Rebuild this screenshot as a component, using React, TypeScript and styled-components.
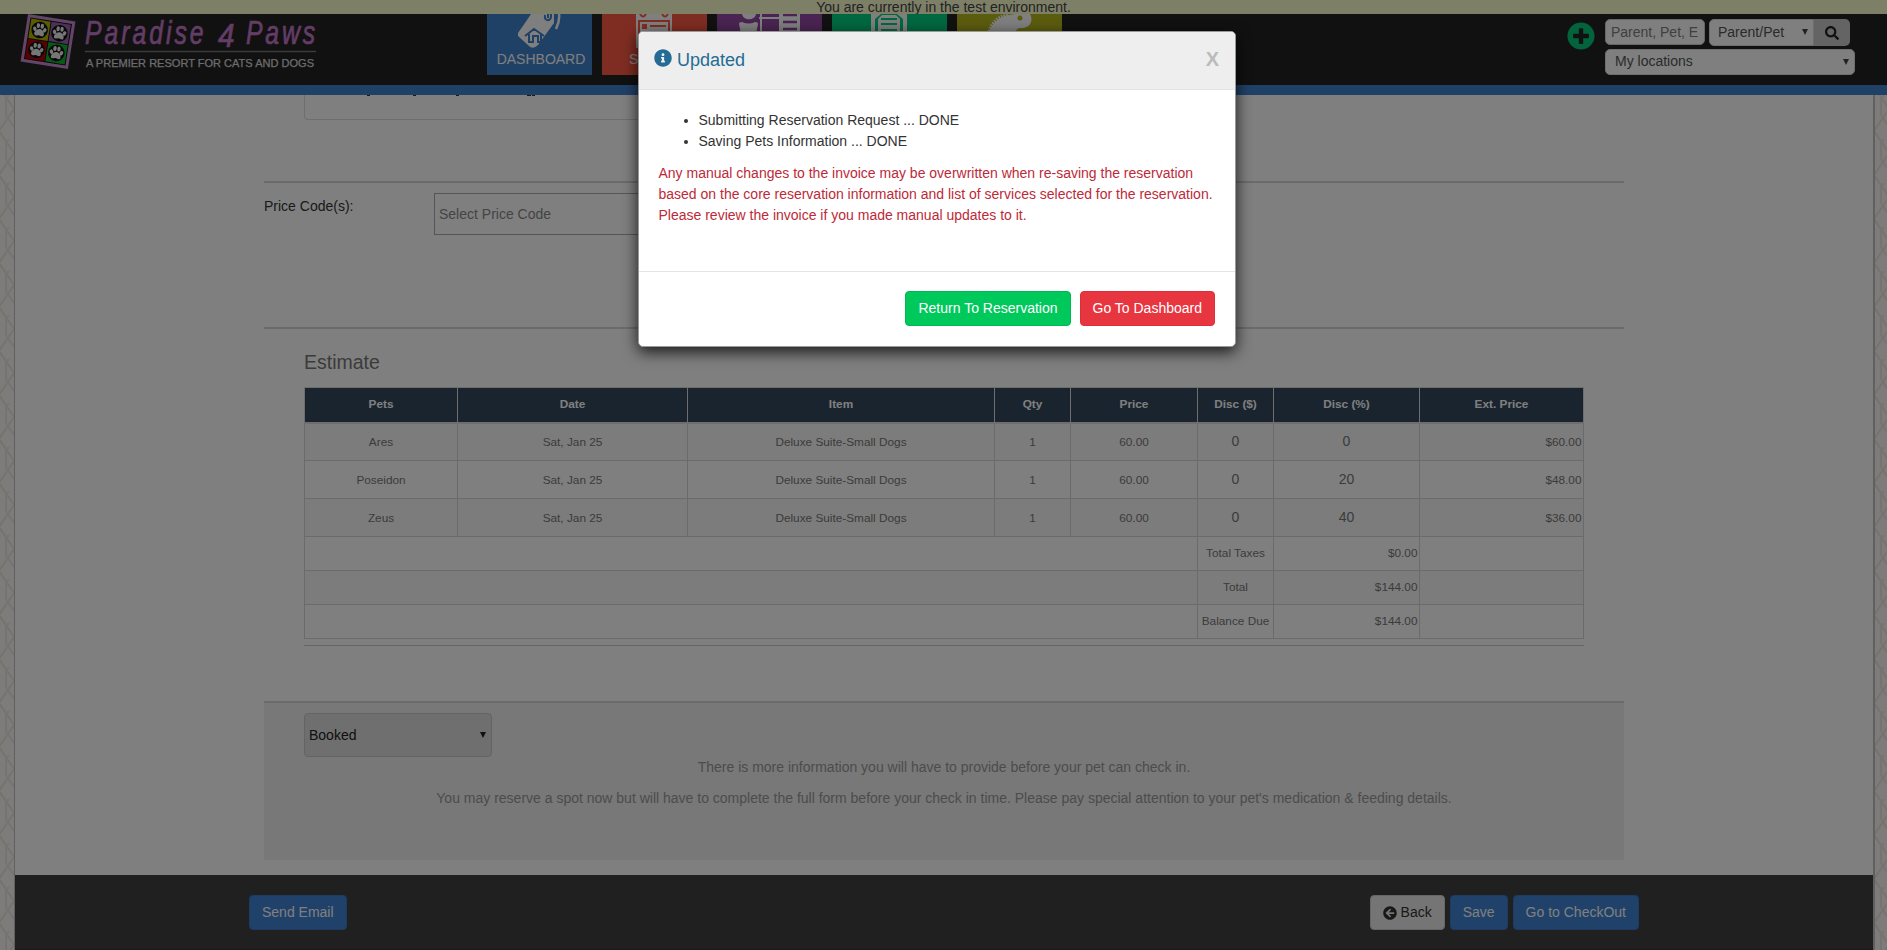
import React from "react";
import styled, { createGlobalStyle } from "styled-components";
import { FaInfoCircle, FaSearch, FaArrowCircleLeft, FaPlusCircle } from "react-icons/fa";

const GlobalStyle = createGlobalStyle`
  * { box-sizing: border-box; }
  body {
    margin: 0;
    overflow: hidden;
    font: 14px/21px "Liberation Sans", Arial, sans-serif;
    color: #333;
  }
`;

const Page = styled.div`
  position: relative;
  width: 1887px;
  height: 950px;
  overflow: hidden;
  display: flex;
  flex-direction: column;
  background: #fff;
`;

const Banner = styled.div`
  flex: 0 0 14px;
  line-height: 14px;
  text-align: center;
  background: #fcffce;
  color: #444;
`;

const Header = styled.header`
  flex: 0 0 81px;
  display: flex;
  background: #222;
  border-bottom: 10px solid #4083cc;
`;

const LogoBox = styled.div`
  width: 487px;
  height: 71px;
`;

const Nav = styled.nav`
  display: flex;
  gap: 10px;
  flex: 1;
`;

const Tile = styled.div<{ $bg: string; $wide?: boolean }>`
  width: ${(p) => (p.$wide ? 115 : 105)}px;
  height: 61px;
  display: flex;
  flex-direction: column;
  background: ${(p) => p.$bg};
  color: #fff;
  svg { flex: none; }
`;

const TileLabel = styled.span<{ $start?: boolean }>`
  margin-top: -8px;
  padding-left: ${(p) => (p.$start ? 27 : 3)}px;
  text-align: ${(p) => (p.$start ? "left" : "center")};
`;

const HeaderTools = styled.div`
  display: flex;
  width: 320px;
`;

const AddButton = styled.div`
  width: 38px;
  padding-top: 8px;
  color: #06c67b;
  font-size: 28px;
  line-height: 0;
`;

const ToolRows = styled.div`
  display: flex;
  flex-direction: column;
  gap: 3px;
  padding-top: 5px;
`;

const SearchRow = styled.div`
  display: flex;
  height: 27px;
`;

const SearchInput = styled.div`
  width: 100px;
  height: 26px;
  margin-right: 4px;
  padding: 0 5px;
  line-height: 25px;
  background: #fff;
  border: 1px solid #ccc;
  border-radius: 5px;
  color: #808080;
  white-space: nowrap;
  overflow: hidden;
`;

const Arrow = styled.i<{ $dark?: boolean }>`
  width: 0;
  height: 0;
  border: 3px solid transparent;
  border-top: 6px solid ${(p) => (p.$dark ? "#222" : "#444")};
  border-bottom: 0;
`;

const KindSelect = styled.div`
  width: 105px;
  display: flex;
  align-items: center;
  justify-content: space-between;
  padding: 0 5px 1px 8px;
  background: #fff;
  border: 1px solid #ddd;
  border-radius: 5px 0 0 5px;
  color: #555;
`;

const SearchButton = styled.div`
  width: 36px;
  display: flex;
  align-items: center;
  justify-content: center;
  background: #c8c8c8;
  border-radius: 0 5px 5px 0;
  color: #222;
`;

const LocationSelect = styled(KindSelect)`
  width: 250px;
  height: 26px;
  padding-left: 9px;
  border-radius: 5px;
`;

const Middle = styled.div`
  flex: 1;
  min-height: 0;
  display: flex;
`;

const Strip = styled.div<{ $right?: boolean }>`
  width: ${(p) => (p.$right ? 14 : 15)}px;
  overflow: hidden;
  background: #faf8f6;
  border: 0 solid #c4c0bd;
  border-width: ${(p) => (p.$right ? "0 0 0 2px" : "0 1px 0 0")};
  svg { display: block; }
`;

const Sheet = styled.main`
  width: 1858px;
  display: flex;
  flex-direction: column;
`;

const Content = styled.div`
  width: 1360px;
  height: 780px;
  margin-left: 249px;
`;

const CutPanel = styled.div`
  width: 600px;
  height: 25px;
  margin-left: 40px;
  border: 1px solid #dcdcdc;
  border-top: 0;
  border-radius: 0 0 4px 4px;
  svg { display: block; }
`;

const PriceSection = styled.section`
  height: 146px;
  margin-top: 61px;
  padding-top: 10px;
  border-top: 2px solid #d6d6d6;
  display: flex;
`;

const PriceLabel = styled.label`
  width: 170px;
  padding-top: 3px;
  color: #333;
`;

const PriceInput = styled.div`
  width: 620px;
  height: 42px;
  padding-left: 4px;
  border: 1px solid #aaa;
  color: #888;
  line-height: 40px;
`;

const EstimateSection = styled.section`
  height: 374px;
  padding: 19px 40px 0;
  border-top: 2px solid #d6d6d6;
`;

const EstimateTitle = styled.h3`
  height: 39px;
  margin: 0;
  font-size: 19.5px;
  font-weight: normal;
  line-height: 28px;
  color: #777;
`;

const Table = styled.table`
  width: 1279px;
  table-layout: fixed;
  border-collapse: collapse;
  font-size: 11.8px;
  line-height: 17px;
  color: #777;
  tbody tr:nth-child(odd) { background: #f9f9f9; }
`;

const Th = styled.th`
  height: 35px;
  padding: 0;
  border: 1px solid #ddd;
  border-bottom: 2px solid #ddd;
  background: #34495e;
  color: #fff;
`;

const Td = styled.td<{ $right?: boolean; $big?: boolean; $short?: boolean }>`
  height: ${(p) => (p.$short ? 34 : 38)}px;
  padding: ${(p) => (p.$big ? "0 0 1px" : p.$short ? "0 1.5px" : "2px 1.5px 0")};
  border: 1px solid #d6d6d6;
  text-align: ${(p) => (p.$right ? "right" : "center")};
  font-size: ${(p) => (p.$big ? "14px" : "inherit")};
  white-space: nowrap;
`;

const Rule = styled.div`
  height: 1px;
  margin-top: 6px;
  background: #c8c8c8;
`;

const StatusSection = styled.section`
  height: 159px;
  padding-top: 10px;
  border-top: 2px solid #d6d6d6;
  background: #f0f0f0;
  text-align: center;
  color: #999;
`;

const StatusSelect = styled.div`
  width: 188px;
  height: 44px;
  margin-left: 40px;
  padding: 0 5px 0 4px;
  display: flex;
  align-items: center;
  justify-content: space-between;
  background: #dedede;
  border: 1px solid #c8c8c8;
  border-radius: 4px;
  color: #222;
`;

const Note = styled.p`
  margin: 0 0 10px;
`;

const Footer = styled.footer`
  height: 75px;
  padding: 20px 234px 0 234px;
  display: flex;
  align-items: flex-start;
  justify-content: space-between;
  background: #404040;
  border-bottom: 1px solid #303030;
`;

const ButtonGroup = styled.div<{ $gap: number }>`
  display: flex;
  gap: ${(p) => p.$gap}px;
`;

const tones = {
  blue: ["#4083d2", "#3a78bf", "#fff"],
  light: ["#eaeaea", "#ccc", "#333"],
  green: ["#00c95c", "#00b853", "#fff"],
  red: ["#e83641", "#dd2e3a", "#fff"],
};

const Button = styled.button<{ $tone: keyof typeof tones }>`
  height: 35px;
  padding: 0 12px;
  display: flex;
  align-items: center;
  gap: 4px;
  font: inherit;
  background: ${(p) => tones[p.$tone][0]};
  border: 1px solid ${(p) => tones[p.$tone][1]};
  border-radius: 4px;
  color: ${(p) => tones[p.$tone][2]};
`;

const Backdrop = styled.div`
  position: absolute;
  inset: 0;
  background: rgba(0, 0, 0, 0.5);
`;

const Modal = styled.div`
  position: absolute;
  left: 638px;
  top: 31px;
  width: 598px;
  height: 316px;
  display: flex;
  flex-direction: column;
  background: #fff;
  border: 1px solid #999;
  border-radius: 5px;
  box-shadow: 0 5px 15px rgba(0, 0, 0, 0.8);
  overflow: hidden;
`;

const ModalHeader = styled.div`
  height: 58px;
  padding: 0 16px 0 15px;
  display: flex;
  justify-content: space-between;
  background: #eee;
  border-bottom: 1px solid #e5e5e5;
  color: #246c95;
`;

const ModalTitle = styled.div`
  display: flex;
  gap: 5px;
  font-size: 18px;
  line-height: 56px;
  svg { margin-top: 17px; }
`;

const Close = styled.span`
  font-size: 20px;
  font-weight: bold;
  line-height: 55px;
  color: #bbb;
`;

const ModalBody = styled.div`
  height: 181px;
  padding: 20px 19.5px;
`;

const StepList = styled.ul`
  margin: 0 0 11px;
  padding-left: 40px;
`;

const Warning = styled.p`
  margin: 0;
  color: #bd2938;
`;

const ModalFooter = styled.div`
  flex: 1;
  padding: 19px 20px 0;
  display: flex;
  justify-content: flex-end;
  border-top: 1px solid #e5e5e5;
`;

const Paw = ({ x, y }: { x: number; y: number }) => (
  <g transform={`translate(${x} ${y})`}>
    <circle r="8.3" fill="#111" />
    <g fill="#eee">
      <path d="M0-1C3-1 6 3 4.500 5.300C3.200 6.800 1.500 5.200 0 5.200S-3.200 6.800-4.500 5.300C-6 3-3-1 0-1Z" />
      <ellipse cx="-5" cy="-.5" rx="1.700" ry="2.300" transform="rotate(-25 -5 -.5)" />
      <ellipse cx="-2" cy="-4.200" rx="1.700" ry="2.500" />
      <ellipse cx="2" cy="-4.200" rx="1.700" ry="2.500" />
      <ellipse cx="5" cy="-.5" rx="1.700" ry="2.300" transform="rotate(25 5 -.5)" />
    </g>
  </g>
);

const Logo = () => (
  <svg width="330" height="71" viewBox="0 14 330 71">
    <g transform="translate(48 41.500) rotate(9)">
      <rect x="-22.500" y="-22.500" width="45" height="45" fill="#111" stroke="#c68ad0" strokeWidth="3" />
      <rect x="-20" y="-20" width="19.500" height="19.500" fill="#b4b800" />
      <rect x=".5" y="-20" width="19.500" height="19.500" fill="#9a62ae" />
      <rect x="-20" y=".5" width="19.500" height="19.500" fill="#b80008" />
      <rect x=".5" y=".5" width="19.500" height="19.500" fill="#10b030" />
      <Paw x={-10} y={-10} />
      <Paw x={10} y={-10} />
      <Paw x={-10} y={10} />
      <Paw x={10} y={10} />
    </g>
    <g fill="#c67acb" fontFamily="Liberation Sans, sans-serif" fontStyle="italic" fontSize="33" stroke="#c67acb" strokeWidth=".7">
      <text transform="translate(85 43.500) scale(.75 1)" textLength="158" lengthAdjust="spacing">Paradise</text>
      <text transform="translate(218 46.500) scale(.9 1)">4</text>
      <text transform="translate(246 43.500) scale(.75 1)" textLength="92" lengthAdjust="spacing">Paws</text>
    </g>
    <path d="M85 51.500H316" stroke="#777" strokeWidth="1.500" />
    <text x="86" y="66.500" fill="#d8d8d8" stroke="#d8d8d8" strokeWidth=".25" fontFamily="Liberation Sans, sans-serif" fontSize="10.500" textLength="228" lengthAdjust="spacingAndGlyphs">
      A PREMIER RESORT FOR CATS AND DOGS
    </text>
  </svg>
);

const TagsIcon = () => (
  <svg width="105" height="43" viewBox="0 0 105 43">
    <path fill="#fff" d="M31 19L38 9L44 0H67V9L51 31Q46 36 42 32L31 22Z" />
    <path d="M72 0C73 7 71 11 69 15" fill="none" stroke="#fff" strokeWidth="2.500" />
    <path d="M58 1C57 7 63 8 64 3V0M61 0V4" fill="none" stroke="#4083cc" strokeWidth="2" />
    <path d="M38 22L47 15L57 22M42 20V28H46V22H51V28H54V20" fill="none" stroke="#4083cc" strokeWidth="2" />
  </svg>
);

const CalendarIcon = () => (
  <svg width="105" height="43" viewBox="0 0 105 43">
    <path fill="#fff" d="M34 0H70V34H34Z" />
    <path d="M38 0Q41 5 44 0M60 0Q63 5 66 0" fill="none" stroke="#ff5a45" strokeWidth="2" />
    <path d="M37 7H67V31H37Z" fill="none" stroke="#ff5a45" strokeWidth="2" />
    <path d="M40 10H45V15H40ZM40 18H45V24H40ZM48 11H64V13H48ZM48 17H64V19H48Z" fill="#ff5a45" />
  </svg>
);

const ContactIcon = () => (
  <svg width="105" height="43" viewBox="0 0 105 43">
    <path fill="#fff" d="M25 0H39C38 7 26 7 25 0ZM22 10Q22 8 25 8Q32 11 38 8Q41 8 41 10L39 20H24ZM43 0H45V20H43ZM62 0H83V20H62ZM42 3H63V5H42Z" />
    <path d="M66 1H80M66 8H80M66 15H80" stroke="#9448a5" strokeWidth="2.300" />
  </svg>
);

const ReportIcon = () => (
  <svg width="115" height="43" viewBox="0 0 115 43">
    <path fill="#fff" d="M39 0H75V22H39Z" />
    <path d="M43 22V5L49 0H65L71 5V22" fill="#00d080" />
    <path fill="#fff" d="M46 22V5L50 1H64L68 5V22Z" />
    <path d="M49 5H65M49 10H65M49 16H65" stroke="#00d080" strokeWidth="2" />
  </svg>
);

const LizardIcon = () => (
  <svg width="105" height="43" viewBox="0 0 105 43">
    <path d="M32 20C34 10 40 3 52 1" fill="none" stroke="#fff" strokeWidth="4" strokeDasharray="1.500 1.200" />
    <path fill="#fff" d="M32 20C34 8 44 1 58 0H73C77 8 72 14 64 14C58 14 60 18 56 21H32Z" />
    <circle cx="63" cy="4" r="2.500" fill="#b9b81f" />
  </svg>
);

const ZigZag = ({ id }: { id: string }) => (
  <svg width="15" height="855">
    <pattern id={id} width="15" height="44" patternUnits="userSpaceOnUse">
      <path d="M-1-8L14 14L-1 36L-7 44M14 58L-1 36" fill="none" stroke="#efe5dd" strokeWidth="2" />
      <path d="M14-8L6 4V20L14 32" fill="none" stroke="#ece8e2" strokeWidth="2" />
    </pattern>
    <rect width="15" height="855" fill={`url(#${id})`} />
  </svg>
);

const columns = [
  ["Pets", 153],
  ["Date", 230],
  ["Item", 307],
  ["Qty", 76],
  ["Price", 127],
  ["Disc ($)", 76],
  ["Disc (%)", 146],
  ["Ext. Price", 164],
] as const;

const bookings = [
  ["Ares", "0", "$60.00"],
  ["Poseidon", "20", "$48.00"],
  ["Zeus", "40", "$36.00"],
];

const totals = [
  ["Total Taxes", "$0.00"],
  ["Total", "$144.00"],
  ["Balance Due", "$144.00"],
];

export default function App() {
  return (
    <Page>
      <GlobalStyle />
      <Banner>You are currently in the test environment.</Banner>
      <Header>
        <LogoBox><Logo /></LogoBox>
        <Nav>
          <Tile $bg="#4083cc"><TagsIcon /><TileLabel>DASHBOARD</TileLabel></Tile>
          <Tile $bg="#ff5a45"><CalendarIcon /><TileLabel $start>S</TileLabel></Tile>
          <Tile $bg="#9448a5"><ContactIcon /></Tile>
          <Tile $bg="#00d080" $wide><ReportIcon /></Tile>
          <Tile $bg="#b9b81f"><LizardIcon /></Tile>
        </Nav>
        <HeaderTools>
          <AddButton><FaPlusCircle /></AddButton>
          <ToolRows>
            <SearchRow>
              <SearchInput>Parent, Pet, E</SearchInput>
              <KindSelect>Parent/Pet<Arrow /></KindSelect>
              <SearchButton><FaSearch /></SearchButton>
            </SearchRow>
            <LocationSelect>My locations<Arrow /></LocationSelect>
          </ToolRows>
        </HeaderTools>
      </Header>
      <Middle>
        <Strip><ZigZag id="zig-left" /></Strip>
        <Sheet>
          <Content>
            <CutPanel>
              <svg width="260" height="2">
                <path d="M62 .5h3M108 .5h3M151 .5h3M222 .5h4M227 .5h3" stroke="#333" />
              </svg>
            </CutPanel>
            <PriceSection>
              <PriceLabel>Price Code(s):</PriceLabel>
              <PriceInput>Select Price Code</PriceInput>
            </PriceSection>
            <EstimateSection>
              <EstimateTitle>Estimate</EstimateTitle>
              <Table>
                <colgroup>
                  {columns.map(([name, width]) => <col key={name} width={width} />)}
                </colgroup>
                <thead>
                  <tr>{columns.map(([name]) => <Th key={name}>{name}</Th>)}</tr>
                </thead>
                <tbody>
                  {bookings.map(([pet, discount, price]) => (
                    <tr key={pet}>
                      <Td>{pet}</Td>
                      <Td>Sat, Jan 25</Td>
                      <Td>Deluxe Suite-Small Dogs</Td>
                      <Td>1</Td>
                      <Td>60.00</Td>
                      <Td $big>0</Td>
                      <Td $big>{discount}</Td>
                      <Td $right>{price}</Td>
                    </tr>
                  ))}
                  {totals.map(([name, amount]) => (
                    <tr key={name}>
                      <Td $short colSpan={5} />
                      <Td $short>{name}</Td>
                      <Td $short $right>{amount}</Td>
                      <Td $short />
                    </tr>
                  ))}
                </tbody>
              </Table>
              <Rule />
            </EstimateSection>
            <StatusSection>
              <StatusSelect>Booked<Arrow $dark /></StatusSelect>
              <Note>There is more information you will have to provide before your pet can check in.</Note>
              <Note>
                You may reserve a spot now but will have to complete the full form before your check in time. Please pay
                special attention to your pet's medication &amp; feeding details.
              </Note>
            </StatusSection>
          </Content>
          <Footer>
            <Button $tone="blue">Send Email</Button>
            <ButtonGroup $gap={5}>
              <Button $tone="light"><FaArrowCircleLeft />Back</Button>
              <Button $tone="blue">Save</Button>
              <Button $tone="blue">Go to CheckOut</Button>
            </ButtonGroup>
          </Footer>
        </Sheet>
        <Strip $right><ZigZag id="zig-right" /></Strip>
      </Middle>
      <Backdrop />
      <Modal>
        <ModalHeader>
          <ModalTitle><FaInfoCircle />Updated</ModalTitle>
          <Close>X</Close>
        </ModalHeader>
        <ModalBody>
          <StepList>
            <li>Submitting Reservation Request ... DONE</li>
            <li>Saving Pets Information ... DONE</li>
          </StepList>
          <Warning>
            Any manual changes to the invoice may be overwritten when re-saving the reservation based on the core
            reservation information and list of services selected for the reservation. Please review the invoice if you
            made manual updates to it.
          </Warning>
        </ModalBody>
        <ModalFooter>
          <ButtonGroup $gap={9}>
            <Button $tone="green">Return To Reservation</Button>
            <Button $tone="red">Go To Dashboard</Button>
          </ButtonGroup>
        </ModalFooter>
      </Modal>
    </Page>
  );
}
